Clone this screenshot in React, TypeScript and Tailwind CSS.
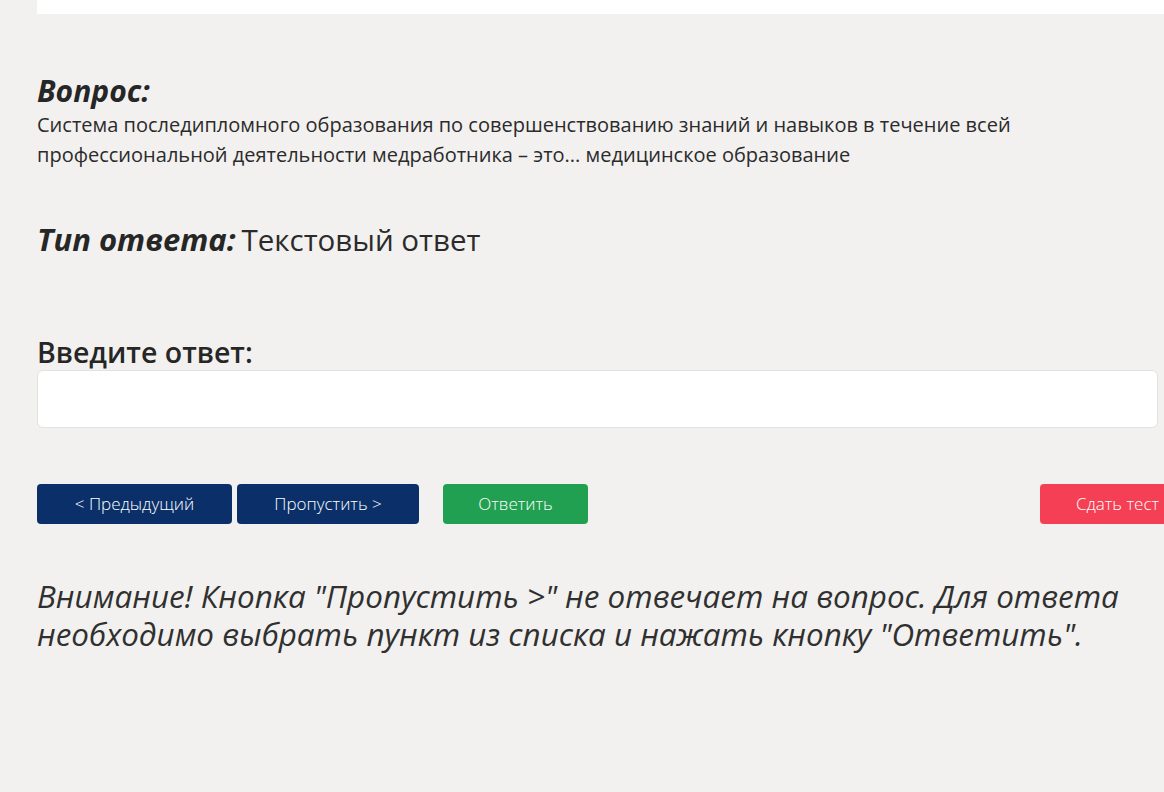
import { useState } from 'react';

const font = { fontFamily: '"Open Sans", "Noto Sans", sans-serif' };

const App = () => {
  const [answer, setAnswer] = useState('');

  return (
    <div className="min-h-[792px] w-full overflow-hidden bg-[#f2f1ef] text-[#262626]" style={font}>
      {/* top card edge */}
      <div className="ml-[37px] h-[14px] bg-white" />

      <div className="pl-[37px] pt-[59px]">
        <h3 className="text-[30px] font-bold italic leading-[36px]">Вопрос:</h3>
        <p className="mt-[1px] max-w-[1000px] text-[20px] leading-[30px] text-[#2b2b2b]">
          Система последипломного образования по совершенствованию знаний и навыков в течение всей профессиональной
          деятельности медработника – это... медицинское образование
        </p>

        <div className="mt-[49px] flex items-baseline gap-[6px] leading-[40px]">
          <span className="text-[31px] font-bold italic">Тип ответа:</span>
          <span className="text-[29.5px] font-normal text-[#2b2b2b]">Текстовый ответ</span>
        </div>

        <label className="mt-[76px] block text-[28.5px] font-semibold leading-[32px]">Введите ответ:</label>
        <input
          value={answer}
          onChange={(e) => setAnswer(e.target.value)}
          className="mt-[2px] block h-[58px] w-[1121px] rounded-[6px] border border-[#e2e2e2] bg-white px-3 text-[18px] outline-none"
        />

        <div className="mt-[56px] flex w-[1140px] items-center text-[17px] font-light text-white">
          <button className="h-[40px] w-[195px] rounded-[4px] bg-[#0b3069]">&lt; Предыдущий</button>
          <button className="ml-[5px] h-[40px] w-[182px] rounded-[4px] bg-[#0b3069]">Пропустить &gt;</button>
          <button className="ml-[24px] h-[40px] w-[145px] rounded-[4px] bg-[#22a052]">Ответить</button>
          <button className="ml-auto h-[40px] w-[137px] shrink-0 rounded-[4px] bg-[#f43f55] pl-[18px]">Сдать тест</button>
        </div>

        <p className="mt-[53px] max-w-[1125px] text-[31.4px] font-normal italic leading-[38px] text-[#303030]">
          Внимание! Кнопка "Пропустить &gt;" не отвечает на вопрос. Для ответа необходимо выбрать пункт из списка и
          нажать кнопку "Ответить".
        </p>
      </div>
    </div>
  );
};

export default App;
